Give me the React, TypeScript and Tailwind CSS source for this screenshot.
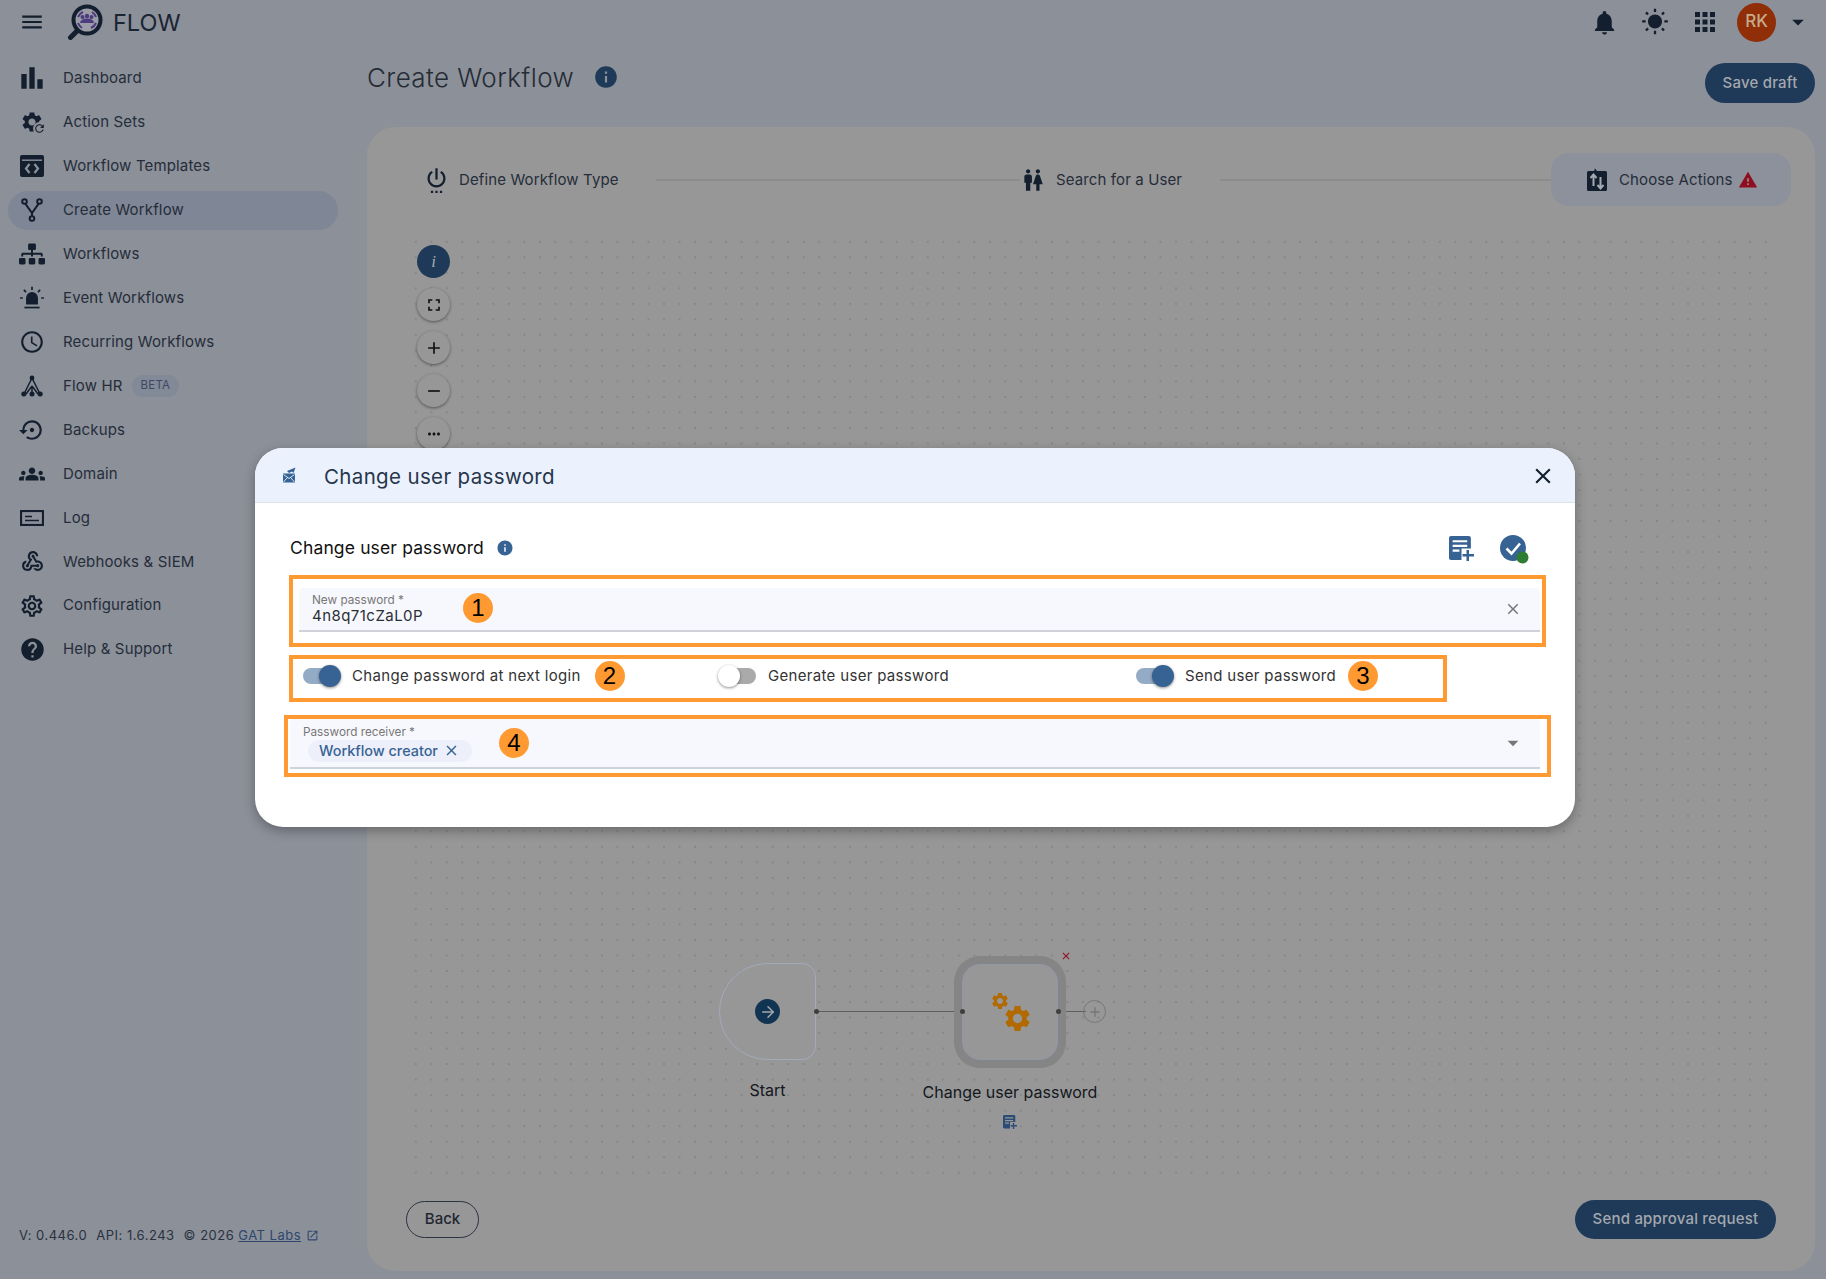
import { ArrowRight } from "lucide-react";
import type { ReactNode } from "react";
import {
  MdAdd,
  MdApps,
  MdArrowDropDown,
  MdBarChart,
  MdClose,
  MdFullscreen,
  MdGroups,
  MdHelp,
  MdInfo,
  MdMenu,
  MdMoreHoriz,
  MdNotifications,
  MdOpenInNew,
  MdOutlineAccessTime,
  MdOutlineSettings,
  MdRefresh,
  MdRemove,
  MdSettings,
  MdSettingsBackupRestore,
  MdSettingsPower,
  MdWarning,
  MdWbSunny,
  MdWc,
  MdWebhook,
} from "react-icons/md";
import { FaSitemap } from "react-icons/fa";

const ink = "#131f2e";

function TemplatesIcon() {
  return (
    <svg width="24" height="22" viewBox="0 0 24 22">
      <rect width="24" height="22" rx="2" fill={ink} />
      <rect x="2" y="4.5" width="20" height="1.4" fill="#8c9099" />
      <path d="M9.5 9 L6 13.5 L9.5 18 M14.500 9 L18 13.500 L14.500 18" fill="none" stroke="#8c9099" strokeWidth="2.2" />
    </svg>
  );
}

function ForkIcon() {
  return (
    <svg width="22" height="24" viewBox="0 0 22 24" fill="none" stroke={ink} strokeWidth="2">
      <circle cx="3.500" cy="3.500" r="2.300" />
      <circle cx="18.500" cy="3.500" r="2.300" />
      <circle cx="11" cy="20.500" r="2.300" />
      <path d="M4.500 5.800 L11 15 L17.500 5.800 M11 15 V18" />
    </svg>
  );
}

function SirenIcon() {
  return (
    <svg width="26" height="26" viewBox="0 0 24 24" fill={ink}>
      <path d="M6.500 18 V12 a5.500 5.500 0 0 1 11 0 V18 Z" />
      <rect x="5" y="20" width="14" height="1.600" />
      <path d="M12 1.500 V4.500 M4.500 4.500 L6.500 6.500 M19.500 4.500 L17.500 6.500 M1 12 H3.500 M20.500 12 H23" stroke={ink} strokeWidth="1.600" />
    </svg>
  );
}

function HrIcon() {
  return (
    <svg width="22" height="22" viewBox="0 0 22 22" fill={ink}>
      <path d="M11 3 L3 19 M11 3 L19 19 M11 11 L5 19 M11 11 L17 19 M11 11 V19" stroke={ink} strokeWidth="1.500" fill="none" />
      <circle cx="11" cy="3" r="2.400" />
      <circle cx="2.800" cy="19" r="2.500" />
      <circle cx="11" cy="19" r="2.500" />
      <circle cx="19.200" cy="19" r="2.500" />
    </svg>
  );
}

function LogIcon() {
  return (
    <svg width="24" height="16" viewBox="0 0 24 16" fill="none">
      <rect x="1" y="1" width="22" height="14" stroke={ink} strokeWidth="2.200" />
      <path d="M5 6.500 H12 M5 10.500 H19" stroke={ink} strokeWidth="1.500" />
    </svg>
  );
}

function GearRefreshIcon() {
  return (
    <span className="relative flex h-[24px] w-[24px] items-center justify-center">
      <MdSettings size={28} color={ink} />
      <span className="absolute bottom-[-1px] right-[-2px] flex h-[13px] w-[13px] items-center justify-center rounded-full bg-[#8c9099]">
        <MdRefresh size={13} color={ink} />
      </span>
    </span>
  );
}

function ActionsIcon() {
  return (
    <svg width="20" height="23" viewBox="0 0 20 23">
      <path d="M1.500 3 H7 L8 0.500 L10 3 H18.500 A1.500 1.500 0 0 1 20 4.500 V21.500 A1.500 1.500 0 0 1 18.500 23 H1.500 A1.500 1.500 0 0 1 0 21.500 V4.500 A1.500 1.500 0 0 1 1.500 3 Z" fill={ink} />
      <path d="M6.500 18 V7 M3.500 10 L6.500 6.500 L9.500 10 M13.500 9 V20 M10.500 17 L13.500 20.500 L16.500 17" stroke="#a5a9b0" strokeWidth="2" fill="none" />
    </svg>
  );
}

function LogoIcon() {
  return (
    <svg width="37" height="36" viewBox="0 0 37 36">
      <path d="M12 25 L3.500 33.500" stroke={ink} strokeWidth="5" strokeLinecap="round" />
      <circle cx="20" cy="16" r="13.500" fill="#9b9ca5" stroke={ink} strokeWidth="4" />
      <path d="M11 13 A10 10 0 0 1 16 8 M29 19 A10 10 0 0 1 24 24 M11 19 A10 10 0 0 0 15 24 M29 13 A10 10 0 0 0 25 8" stroke="#4c3b7e" strokeWidth="2" fill="none" />
      <circle cx="15.500" cy="13" r="2" fill="#4c3b7e" />
      <circle cx="20" cy="12" r="2.200" fill="#4c3b7e" />
      <circle cx="24.500" cy="13" r="2" fill="#4c3b7e" />
      <path d="M13 19 a7 4.500 0 0 1 14 0 Z" fill="#4c3b7e" />
    </svg>
  );
}

function SendMailIcon() {
  return (
    <svg width="14" height="16" viewBox="0 0 14 16">
      <path d="M5 4 L13.500 0.500 L11.500 6 L10 4.500 L7 6 Z" fill="#366393" />
      <rect x="1" y="6.500" width="12" height="9" fill="#366393" />
      <path d="M1.500 7.500 L7 11.500 L12.500 7.500 M1.500 15 L5.500 10.500 M12.500 15 L8.500 10.500" stroke="#ebf2fe" strokeWidth="0.900" fill="none" />
    </svg>
  );
}

function DocPlusIcon({ size, color, bg }: { size: number; color: string; bg: string }) {
  return (
    <svg width={size} height={size} viewBox="0 0 24 24">
      <rect x="0" y="0" width="21" height="23" rx="2" fill={color} />
      <path d="M3.500 5 H17.500 M3.500 9.500 H17.500 M3.500 14 H10" stroke={bg} strokeWidth="2" />
      <rect x="12" y="12" width="12" height="12" fill={bg} />
      <path d="M18 13.500 V24 M13 18.500 H24" stroke={color} strokeWidth="2.400" />
    </svg>
  );
}

function CheckDotIcon() {
  return (
    <svg width="29" height="29" viewBox="0 0 29 29">
      <circle cx="13" cy="13" r="13" fill="#366393" />
      <path d="M6.500 13.500 L11.500 18.500 L20 8.500" stroke="#fff" strokeWidth="2.600" fill="none" />
      <circle cx="22.500" cy="22.500" r="6" fill="#2f7d32" />
    </svg>
  );
}

const NAV: { label: string; icon: ReactNode; active?: boolean; beta?: boolean }[] = [
  { label: "Dashboard", icon: <MdBarChart size={32} color={ink} /> },
  { label: "Action Sets", icon: <GearRefreshIcon /> },
  { label: "Workflow Templates", icon: <TemplatesIcon /> },
  { label: "Create Workflow", icon: <ForkIcon />, active: true },
  { label: "Workflows", icon: <FaSitemap size={26} color={ink} /> },
  { label: "Event Workflows", icon: <SirenIcon /> },
  { label: "Recurring Workflows", icon: <MdOutlineAccessTime size={26} color={ink} /> },
  { label: "Flow HR", icon: <HrIcon />, beta: true },
  { label: "Backups", icon: <MdSettingsBackupRestore size={26} color={ink} /> },
  { label: "Domain", icon: <MdGroups size={26} color={ink} /> },
  { label: "Log", icon: <LogIcon /> },
  { label: "Webhooks & SIEM", icon: <MdWebhook size={25} color={ink} /> },
  { label: "Configuration", icon: <MdOutlineSettings size={26} color={ink} /> },
  { label: "Help & Support", icon: <MdHelp size={27} color={ink} /> },
];

function Sidebar() {
  return (
    <aside className="flex w-[367px] shrink-0 flex-col">
      <nav className="mt-[12.500px] flex flex-col">
        {NAV.map((n) => (
          <div key={n.label} className="flex h-[43.950px] items-center">
            <div className={`ml-[8px] flex h-[39px] w-[330px] items-center rounded-full ${n.active ? "bg-[#7f8695]" : ""}`}>
              <span className="flex w-[48px] shrink-0 justify-center">{n.icon}</span>
              <span className="ml-[7px] text-[15px] tracking-[0.15px] text-[#252d3a]">{n.label}</span>
              {n.beta && (
                <span className="ml-[9px] rounded-full bg-[#828997] px-[9px] py-[2px] text-[11.500px] tracking-[0.2px] text-[#3c4966]">BETA</span>
              )}
            </div>
          </div>
        ))}
      </nav>
      <div className="mb-[34px] ml-[19px] mt-auto flex items-center text-[13px] tracking-[0.5px] text-[#2a3240]">
        <span>V: 0.446.0</span>
        <span className="ml-[9px]">API: 1.6.243</span>
        <span className="ml-[9px]">© 2026</span>
        <span className="ml-[4px] text-[#2c486e] underline">GAT Labs</span>
        <MdOpenInNew size={13} color="#2c486e" className="ml-[5px]" />
      </div>
    </aside>
  );
}

function CanvasButton({ children, blue }: { children: ReactNode; blue?: boolean }) {
  return (
    <div
      className={`flex h-[33px] w-[33px] items-center justify-center rounded-full ${
        blue ? "bg-[#1f3a58]" : "bg-[#979797] shadow-[0_1px_3px_rgba(0,0,0,0.45)]"
      }`}
    >
      {children}
    </div>
  );
}

function Stepper() {
  return (
    <div className="ml-[56px] mr-[24px] mt-[26px] flex h-[53px] items-center text-[15px] tracking-[0.12px] text-[#252d3a]">
      <MdSettingsPower size={27} color={ink} className="shrink-0" />
      <span className="ml-[9px] mt-[2px] w-[159px] whitespace-nowrap">Define Workflow Type</span>
      <div className="ml-[38px] h-[2px] w-[364px] bg-[#8c8c8c]" />
      <MdWc size={26} color={ink} className="shrink-0" />
      <span className="ml-[10px] mt-[2px] w-[126px] whitespace-nowrap">Search for a User</span>
      <div className="ml-[38px] h-[2px] w-[331px] bg-[#8c8c8c]" />
      <div className="flex h-[53px] w-[240px] items-center rounded-[18px] bg-[#8c919b] pl-[36px]">
        <ActionsIcon />
        <span className="ml-[12px] mt-[2px] whitespace-nowrap">Choose Actions</span>
        <MdWarning size={20} color="#8f0d1e" className="ml-[5px]" />
      </div>
    </div>
  );
}

function FlowCanvas() {
  return (
    <div className="relative ml-[41px] mt-[28px] h-[946px] w-[1367px] bg-[radial-gradient(circle,#787878_0.5px,transparent_0.9px)] bg-[size:15.520px_15.520px]">
      <div className="absolute left-[9px] top-[11px] flex flex-col gap-[10px]">
        <CanvasButton blue>
          <span className="font-['Liberation_Serif',serif] text-[17px] italic text-[#a4a8ae]">i</span>
        </CanvasButton>
        <CanvasButton><MdFullscreen size={20} color="#111" /></CanvasButton>
        <CanvasButton><MdAdd size={20} color="#111" /></CanvasButton>
        <CanvasButton><MdRemove size={20} color="#111" /></CanvasButton>
        <CanvasButton><MdMoreHoriz size={18} color="#111" /></CanvasButton>
      </div>

      {/* start node */}
      <div className="absolute left-[311px] top-[729px] flex h-[97px] w-[97px] items-center justify-center rounded-l-[49px] rounded-r-[14px] border border-[#a2aabb] bg-[#979797]">
        <span className="flex h-[25px] w-[25px] items-center justify-center rounded-full bg-[#123453]">
          <ArrowRight size={18} color="#a4a8ae" />
        </span>
      </div>
      <div className="absolute left-[311px] top-[844px] w-[97px] text-center text-[16px] text-[#131820]">Start</div>

      {/* connectors */}
      <div className="absolute left-[408px] top-[777px] h-[1px] w-[146px] bg-[#5f5f5f]" />
      <div className="absolute left-[650px] top-[777px] h-[1px] w-[28px] bg-[#5f5f5f]" />
      <div className="absolute left-[405.500px] top-[775px] h-[5px] w-[5px] rounded-full bg-[#3f3f3f]" />

      {/* action node */}
      <div className="absolute left-[546px] top-[722px] h-[112px] w-[112px] rounded-[26px] bg-[#858585] p-[8px]">
        <div className="relative h-full w-full rounded-[18px] border border-[#8f97a8] bg-[#979797]">
          <MdSettings size={20} color="#b26a00" className="absolute left-[27px] top-[26px]" />
          <MdSettings size={31} color="#b26a00" className="absolute left-[39px] top-[38px]" />
        </div>
      </div>
      <div className="absolute left-[551.500px] top-[775px] h-[5px] w-[5px] rounded-full bg-[#3f3f3f]" />
      <div className="absolute left-[647.500px] top-[775px] h-[5px] w-[5px] rounded-full bg-[#3f3f3f]" />
      <MdClose size={12} color="#8f1020" className="absolute left-[652px] top-[716px]" />
      <div className="absolute left-[675px] top-[766px] flex h-[23px] w-[23px] items-center justify-center rounded-full border border-[#777] bg-transparent">
        <MdAdd size={16} color="#777" />
      </div>
      <div className="absolute left-[502px] top-[846px] w-[200px] text-center text-[16px] text-[#131820]">Change user password</div>
      <div className="absolute left-[595px] top-[881px]">
        <DocPlusIcon size={14} color="#2b4d75" bg="#979797" />
      </div>
    </div>
  );
}

function Toggle({ on }: { on?: boolean }) {
  return (
    <span className={`relative flex h-[22px] w-[38px] shrink-0 items-center ${on ? "justify-start" : "justify-end"}`}>
      <span className={`h-[16px] w-[34px] rounded-full ${on ? "bg-[#94abc6]" : "bg-[#aaaaaa]"}`} />
      <span
        className={`absolute top-0 h-[22px] w-[22px] rounded-full shadow-[0_1px_3px_rgba(0,0,0,0.45)] ${
          on ? "right-0 bg-[#366393]" : "left-0 bg-white"
        }`}
      />
    </span>
  );
}

function NumberBadge({ n }: { n: number }) {
  return (
    <span className="flex h-[30px] w-[30px] shrink-0 items-center justify-center rounded-full bg-[#ff9a33] font-['Liberation_Sans',sans-serif] text-[24px] leading-none text-black">
      {n}
    </span>
  );
}

function Modal() {
  return (
    <div className="absolute left-[255px] top-[448px] h-[379px] w-[1320px] overflow-hidden rounded-[28px] bg-white shadow-[0_4px_12px_rgba(0,0,0,0.3)]">
      <div className="flex h-[55px] items-center border-b border-[#dde1e8] bg-[#ebf2fe] pl-[27px] pr-[19px]">
        <SendMailIcon />
        <span className="ml-[28px] mt-[4px] text-[20.500px] tracking-[0.35px] text-[#27364b]">Change user password</span>
        <MdClose size={26} color="#15202e" className="ml-auto mt-[1px]" />
      </div>

      <div className="ml-[35px] mt-[32px] flex h-[26px] w-[1239px] items-center">
        <span className="text-[17.500px] tracking-[0.14px] text-[#111]">Change user password</span>
        <MdInfo size={18} color="#366393" className="ml-[12px]" />
        <span className="ml-auto"><DocPlusIcon size={25} color="#366393" bg="#fff" /></span>
        <span className="ml-[26px] mt-[3px]"><CheckDotIcon /></span>
      </div>

      <div className="ml-[34px] mt-[14px] h-[72px] w-[1257px] border-4 border-[#ff9a33] pl-[6px] pr-[2px] pt-[9px]">
        <div className="flex h-[44px] items-center rounded-t-[4px] border-b-2 border-[#cfd2d8] bg-[#f7f8fd] pl-[13px] pr-[18px]">
          <div className="w-[151px]">
            <div className="text-[11.750px] leading-[14px] text-[#777]">New password *</div>
            <div className="text-[15px] leading-[18px] tracking-[0.46px] text-[#2a2f36]">4n8q71cZaL0P</div>
          </div>
          <span className="mb-[2px]"><NumberBadge n={1} /></span>
          <MdClose size={18} color="#777" className="ml-auto" />
        </div>
      </div>

      <div className="ml-[34px] mt-[8px] flex h-[47px] w-[1158px] items-center border-4 border-[#ff9a33] pb-[5px] pl-[10px] text-[15px] tracking-[0.32px] text-[#333]">
        <div className="flex w-[415px] items-center">
          <Toggle on />
          <span className="ml-[11px] whitespace-nowrap">Change password at next login</span>
          <span className="ml-[14px]"><NumberBadge n={2} /></span>
        </div>
        <div className="flex w-[418px] items-center">
          <Toggle />
          <span className="ml-[12px] whitespace-nowrap">Generate user password</span>
        </div>
        <div className="flex items-center">
          <Toggle on />
          <span className="ml-[11px] whitespace-nowrap">Send user password</span>
          <span className="ml-[12px]"><NumberBadge n={3} /></span>
        </div>
      </div>

      <div className="ml-[29px] mt-[13px] h-[62px] w-[1267px] border-4 border-[#ff9a33] pl-[2px] pr-[7px]">
        <div className="flex h-[50px] items-center rounded-t-[4px] border-b-2 border-[#cfd2d8] bg-[#f7f8fd] pl-[13px] pr-[18px]">
          <div className="w-[196px]">
            <div className="text-[11.750px] leading-[14px] text-[#777]">Password receiver *</div>
            <div className="ml-[5px] mt-[1px] flex h-[22px] w-[164px] items-center rounded-full bg-[#edf0fa] pl-[11px] text-[14.400px] font-medium text-[#366393]">
              Workflow creator
              <MdClose size={17} color="#366393" className="ml-[5px]" />
            </div>
          </div>
          <NumberBadge n={4} />
          <MdArrowDropDown size={26} color="#777" className="ml-auto mr-[-4px]" />
        </div>
      </div>
    </div>
  );
}

export default function App() {
  return (
    <div className="relative h-[1279px] w-[1826px] overflow-hidden bg-[#8c9099] font-['Inter',sans-serif]">
      <header className="flex h-[44px] items-center">
        <MdMenu size={26} color={ink} className="ml-[19px]" />
        <span className="ml-[22px]"><LogoIcon /></span>
        <span className="ml-[9px] mt-[1px] text-[23.500px] text-[#1a2433]">FLOW</span>
        <div className="ml-auto flex items-center">
          <MdNotifications size={29} color={ink} />
          <MdWbSunny size={28} color={ink} className="ml-[22px]" />
          <MdApps size={30} color={ink} className="ml-[21px]" />
          <span className="ml-[17px] flex h-[39px] w-[39px] items-center justify-center rounded-full bg-[#8f2e07] text-[17px] font-medium text-[#c7ab8a]">RK</span>
          <MdArrowDropDown size={28} color={ink} className="ml-[8px] mr-[14px]" />
        </div>
      </header>

      <div className="flex h-[1235px]">
        <Sidebar />
        <main className="flex w-[1448px] flex-col">
          <div className="flex h-[83px] justify-between">
            <div className="flex h-[66px] items-center">
              <h1 className="text-[26px] font-light tracking-[0.4px] text-[#252b35]">Create Workflow</h1>
              <MdInfo size={26} color="#1f3a58" className="ml-[19px]" />
            </div>
            <button className="mt-[19px] h-[40px] w-[110px] rounded-full bg-[#1f3a58] text-[15px] font-medium tracking-[0.2px] text-[#a4a8ae]">Save draft</button>
          </div>
          <section className="flex h-[1144px] flex-col rounded-[28px] bg-[#979797]">
            <Stepper />
            <FlowCanvas />
            <div className="mx-[39px] mt-[20px] flex items-center justify-between">
              <button className="h-[37px] w-[73px] rounded-full border-[1.500px] border-[#2b3240] text-[15px] font-medium text-[#1f2632]">Back</button>
              <button className="h-[39px] w-[201px] rounded-full bg-[#1f3a58] text-[15px] font-medium tracking-[0.2px] text-[#a4a8ae]">Send approval request</button>
            </div>
          </section>
        </main>
      </div>

      <Modal />
    </div>
  );
}
